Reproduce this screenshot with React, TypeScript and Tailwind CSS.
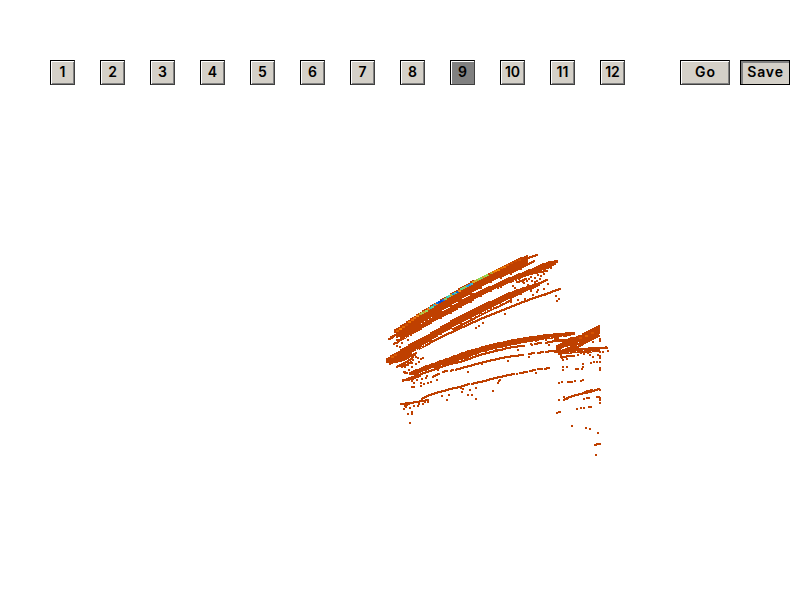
import React from "react";

type Pt = [number, number];
const RUST = "#bf4000";

// Smooth interpolation along a list of points ordered by x.
function at(pts: Pt[], x: number) {
  const n = pts.length;
  if (x <= pts[0][0]) return pts[0][1];
  if (x >= pts[n - 1][0]) return pts[n - 1][1];
  let i = 1;
  while (x > pts[i][0]) i++;
  const slope = (k: number) => {
    const a = pts[Math.max(0, k - 1)];
    const b = pts[Math.min(n - 1, k + 1)];
    return (b[1] - a[1]) / (b[0] - a[0]);
  };
  const [x0, y0] = pts[i - 1];
  const [x1, y1] = pts[i];
  const h = x1 - x0;
  const t = (x - x0) / h;
  const t2 = t * t;
  const t3 = t2 * t;
  return (2 * t3 - 3 * t2 + 1) * y0 + (t3 - 2 * t2 + t) * h * slope(i - 1) + (3 * t2 - 2 * t3) * y1 + (t3 - t2) * h * slope(i);
}

// A band is filled by two pixel wide columns between its two edges.
function band(top: Pt[], bottom: Pt[]) {
  let d = "";
  for (let x = top[0][0]; x < top[top.length - 1][0]; x += 2) {
    const a = Math.round(at(top, x + 1));
    const wobble = (x * 7) % 5 === 0 ? 1 : 0;
    const b = Math.max(a + 2, Math.round(at(bottom, x + 1)) + wobble);
    d += `M${x} ${a}h2V${b}h-2z`;
  }
  return d;
}

// Overlapping two pixel samples along a line.
function strand(pts: Pt[]) {
  let d = "";
  for (let x = pts[0][0]; x < pts[pts.length - 1][0]; x += 1) {
    d += `M${x} ${Math.round(at(pts, x + 1)) - 1}h2v2h-2z`;
  }
  return d;
}

const dots = (pts: Pt[]) => pts.map(([x, y]) => `M${x} ${y}h2v2h-2z`).join("");

const bands: [Pt[], Pt[]][] = [
  [
    [[394, 330], [400, 326], [413, 317], [422, 311], [440, 300], [450, 294], [470, 282], [487, 274], [500, 267], [517, 259], [528, 255]],
    [[394, 333], [404, 333], [420, 324], [430, 318], [450, 306], [475, 291], [493, 281], [510, 274], [528, 265]],
  ],
  [
    [[398, 330], [404, 326], [420, 322], [432, 317], [450, 307], [470, 295], [490, 286], [510, 277], [530, 269], [547, 262], [557, 260]],
    [[398, 337], [403, 338], [413, 334], [430, 324], [447, 315], [467, 304], [483, 295], [500, 287], [517, 279], [533, 273], [550, 268], [557, 263]],
  ],
  [
    [[386, 359], [390, 356], [400, 350], [413, 342], [430, 333], [450, 321], [470, 311], [490, 301], [510, 292], [530, 285], [540, 282]],
    [[386, 363], [396, 363], [404, 359], [413, 352], [430, 341], [450, 329], [475, 316], [493, 307], [510, 299], [530, 290], [540, 286]],
  ],
  [
    [[409, 373], [417, 369], [430, 364], [447, 358], [463, 352], [480, 347], [500, 342], [520, 338], [540, 335], [558, 333], [574, 332]],
    [[409, 375], [417, 374], [430, 369], [447, 364], [467, 358], [480, 353], [500, 348], [523, 343], [550, 339], [574, 335]],
  ],
  [
    [[556, 346], [567, 339], [580, 335], [590, 329], [600, 325]],
    [[556, 349], [563, 348], [577, 343], [590, 337], [600, 334]],
  ],
  [
    [[558, 350], [580, 348], [600, 347]],
    [[558, 355], [564, 354], [580, 353], [600, 352]],
  ],
];

const strands: Pt[][] = [
  [[388, 340], [393, 337], [400, 331]],
  [[390, 338], [396, 335], [402, 334]],
  [[393, 344], [398, 342], [404, 337], [412, 332]],
  [[396, 340], [403, 339], [410, 334]],
  [[396, 337], [402, 335]],
  [[528, 258], [537, 255]],
  [[522, 267], [529, 264], [534, 261]],
  [[519, 278], [530, 274], [547, 271]],
  [[526, 273], [538, 270], [550, 267]],
  [[518, 282], [526, 279]],
  [[536, 285], [547, 280]],
  [[452, 330], [475, 318], [495, 308], [511, 300]],
  [[417, 350], [430, 343], [450, 333], [463, 327], [483, 318], [503, 310], [523, 302], [543, 295], [560, 289]],
  [[396, 367], [402, 364], [408, 361], [413, 357]],
  [[398, 366], [406, 365], [411, 362]],
  [[402, 361], [409, 357], [416, 353]],
  [[404, 358], [411, 355], [415, 355]],
  [[389, 364], [396, 361]],
  [[403, 372], [407, 373]],
  [[402, 381], [413, 377], [430, 371], [447, 365], [463, 361], [480, 355], [500, 350], [513, 347], [524, 346]],
  [[402, 380], [408, 380], [420, 376]],
  [[432, 377], [439, 374]],
  [[442, 372], [447, 371]],
  [[450, 371], [453, 370]],
  [[455, 370], [473, 365], [493, 360], [507, 357], [523, 355]],
  [[528, 354], [534, 353]],
  [[537, 353], [543, 352]],
  [[545, 352], [560, 350]],
  [[400, 404], [410, 403], [428, 400]],
  [[404, 406], [410, 403]],
  [[421, 399], [430, 395], [447, 390], [463, 386], [469, 384]],
  [[471, 384], [480, 382], [500, 377], [514, 374]],
  [[519, 373], [527, 372]],
  [[529, 371], [535, 370]],
  [[537, 369], [542, 369]],
  [[544, 369], [549, 368]],
  [[534, 344], [541, 343]],
  [[545, 343], [556, 341], [565, 341]],
  [[554, 335], [564, 334]],
  [[554, 339], [566, 340], [572, 338]],
  [[558, 352], [570, 348], [577, 347], [590, 340], [599, 336]],
  [[564, 350], [578, 344], [599, 333]],
  [[554, 352], [570, 350], [590, 349], [607, 348]],
  [[560, 357], [573, 356]],
  [[563, 400], [570, 397], [580, 394], [590, 392], [599, 389]],
  [[584, 392], [592, 390]],
  [[594, 445], [599, 444]],
  [[568, 382], [571, 382]],
];

const stray: Pt[] = [
  [478, 325], [475, 327], [482, 322], [504, 313], [497, 311], [510, 301], [517, 299], [524, 298], [532, 294], [536, 291], [558, 298], [555, 295], [556, 300],
  [512, 285], [514, 287], [520, 280], [523, 282], [527, 284], [531, 280], [530, 276], [534, 277], [540, 275], [539, 278], [543, 273], [536, 280], [524, 278], [516, 281],
  [526, 280], [528, 278], [518, 278], [533, 285], [530, 290], [522, 281], [543, 288], [537, 289], [544, 294], [547, 283], [512, 280], [515, 279], [534, 281], [537, 274],
  [497, 287], [500, 285], [407, 339], [401, 342], [399, 346], [394, 342], [420, 326], [398, 340], [396, 345],
  [404, 366], [407, 364], [411, 362], [418, 361], [422, 357], [420, 358], [415, 363], [408, 369], [404, 371], [401, 366], [412, 359], [415, 356], [411, 366], [417, 357],
  [411, 386], [413, 386], [420, 385], [420, 382], [423, 383], [427, 382], [430, 381], [436, 379], [413, 382], [421, 378], [425, 377], [416, 379], [426, 375], [411, 380],
  [409, 422], [407, 413], [411, 413], [411, 411], [403, 408], [405, 406], [409, 407], [413, 405], [418, 403], [422, 403], [424, 401], [417, 405], [427, 401],
  [441, 395], [446, 399], [448, 394], [460, 387], [461, 391], [462, 388], [469, 389], [467, 394], [471, 394], [475, 398], [475, 387], [492, 390], [497, 382], [499, 379], [498, 380],
  [467, 371], [437, 369], [481, 363], [517, 349], [530, 343], [531, 344], [548, 344], [548, 341], [507, 360], [516, 373], [528, 356], [535, 372],
  [558, 382], [561, 381], [567, 381], [571, 381], [574, 380], [580, 380], [582, 379],
  [562, 369], [562, 366], [566, 366], [575, 368], [577, 368], [581, 368], [582, 366], [590, 362], [593, 361], [596, 361], [599, 361], [582, 363], [589, 354], [599, 351], [599, 355], [599, 357], [599, 369], [599, 367],
  [602, 351], [605, 346], [607, 350], [597, 354], [592, 356], [587, 352], [583, 353], [577, 354], [573, 355], [566, 358], [561, 357], [560, 354], [562, 359], [592, 341], [599, 338], [599, 340],
  [563, 396], [563, 399], [566, 398], [558, 399], [583, 398], [586, 397], [588, 397], [596, 396], [598, 396], [599, 397], [599, 399], [599, 402],
  [576, 408], [580, 407], [583, 407], [588, 406], [590, 406], [556, 412], [558, 411], [559, 411],
  [571, 425], [585, 427], [589, 428], [597, 432], [599, 443], [595, 454], [599, 389],
];

// Small openings between neighbouring scan lines.
const gaps: Pt[] = [
  [421, 323], [424, 321], [428, 319], [431, 317], [409, 335], [405, 337], [418, 349], [421, 347], [424, 345], [428, 342], [433, 339], [440, 335], [445, 332],
  [477, 315], [480, 314], [483, 312], [486, 311], [489, 309], [492, 308], [495, 306], [498, 305], [501, 303], [504, 302], [544, 339], [550, 337], [562, 336], [566, 338], [569, 352], [576, 351], [583, 350], [591, 351],
];

// Colour and position of the hotter samples on the upper edge.
const heat: [number, number, string][] = [
  [396, 330, "#e06000"], [399, 328, "#ff8000"], [402, 326, "#e66800"], [405, 324, "#d05000"], [408, 321, "#ed7600"], [411, 319, "#ed6500"],
  [413, 317, "#e07018"], [416, 315, "#f08a18"], [419, 313, "#b8b833"], [421, 312, "#aecb50"], [423, 311, "#d59a22"], [425, 310, "#93d85a"],
  [427, 308, "#f07d1c"], [429, 307, "#30c8bd"], [431, 306, "#60d6a0"], [433, 304, "#1bafd0"], [435, 303, "#f08020"], [436, 302, "#0871e0"],
  [438, 301, "#004bdb"], [440, 300, "#004bdb"], [442, 299, "#1e69e8"], [444, 298, "#80ce68"], [446, 296, "#39c9b8"], [448, 295, "#57d7b1"],
  [450, 294, "#c0ad2c"], [452, 293, "#1495e9"], [454, 292, "#55cba2"], [456, 291, "#0869d2"], [458, 290, "#f08c18"], [460, 288, "#66d587"],
  [462, 287, "#67cf89"], [464, 286, "#9bc74d"], [466, 285, "#29a9db"], [468, 284, "#218fe2"], [470, 283, "#38b7d1"], [472, 281, "#eaa020"],
  [474, 280, "#c9ad30"], [476, 279, "#b7ae35"], [478, 278, "#8bda58"], [480, 277, "#82d665"], [482, 276, "#d1a130"], [484, 275, "#94d653"],
  [486, 274, "#9cd653"], [488, 273, "#cc4500"], [490, 272, "#b7a830"], [492, 271, "#df7600"], [494, 270, "#ef8710"], [497, 269, "#f58c00"],
  [500, 267, "#df6700"], [503, 266, "#e87400"], [506, 264, "#d95800"], [510, 262, "#d05000"], [514, 260, "#cc4c00"], [518, 259, "#d05000"],
  [391, 356, "#e06000"], [394, 354, "#d85500"], [579, 337, "#d65000"], [585, 335, "#e06000"], [591, 332, "#d45000"],
];

function ScatterPlot() {
  return (
    <svg className="block h-[370px] w-[800px]" viewBox="0 230 800 370" shapeRendering="crispEdges">
      <path fill={RUST} d={bands.map(([a, b]) => band(a, b)).join("")} />
      <path fill={RUST} d={strands.map(strand).join("")} />
      <path fill={RUST} d={dots(stray)} />
      {gaps.map(([x, y]) => (
        <rect key={`${x}-${y}`} x={x} y={y} width={1} height={1} fill="#fff" />
      ))}
      {heat.map(([x, y, c]) => (
        <rect key={`${x}-${y}`} x={x} y={y} width={3} height={2} fill={c} />
      ))}
    </svg>
  );
}

function PushButton({ label, wide, active, pressed }: { label: string; wide?: boolean; active?: boolean; pressed?: boolean }) {
  const bevel = pressed
    ? "border border-black shadow-[inset_2px_2px_0_#808080]"
    : active
      ? "border border-t-black border-l-black border-r-[#404040] border-b-[#404040] shadow-[inset_1px_1px_0_#fff]"
      : "border border-t-black border-l-black border-r-[#404040] border-b-[#404040] shadow-[inset_1px_1px_0_#fff,inset_-1px_-1px_0_#808080]";
  return (
    <button
      className={`flex h-[25px] items-center justify-center pb-px text-sm leading-none font-semibold text-black ${wide ? "w-[50px] pl-px tracking-[0.9px]" : "w-[25px]"} ${active ? "bg-[#808080]" : "bg-[#d4d0c8]"} ${bevel}`}
    >
      {label}
    </button>
  );
}

export default function App() {
  return (
    <main className="h-[600px] w-[800px] overflow-hidden bg-white font-[Inter,'Liberation_Sans',sans-serif]">
      <header className="flex h-[230px] items-start pt-[60px] pl-[50px]">
        <div className="flex gap-[25px]">
          {Array.from({ length: 12 }, (_, i) => (
            <PushButton key={i} label={String(i + 1)} active={i === 8} />
          ))}
        </div>
        <div className="ml-[55px] flex gap-2.5">
          <PushButton label="Go" wide />
          <PushButton label="Save" wide pressed />
        </div>
      </header>
      <ScatterPlot />
    </main>
  );
}
